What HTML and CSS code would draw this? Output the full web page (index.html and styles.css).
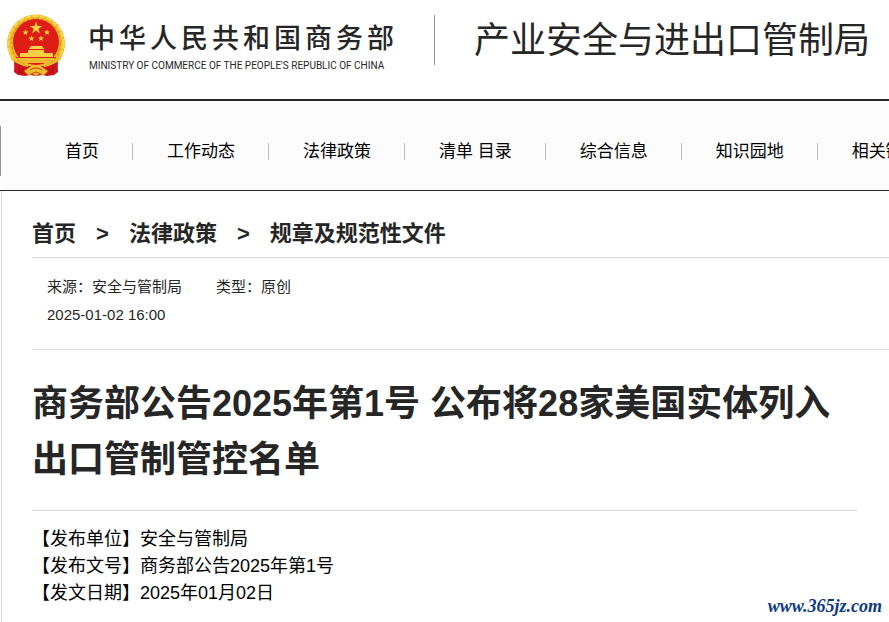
FILE: index.html
```html
<!DOCTYPE html>
<html lang="zh-CN">
<head>
<meta charset="utf-8">
<meta name="viewport" content="width=device-width, initial-scale=1">
<title>商务部公告2025年第1号</title>
<link rel="stylesheet" href="styles.css">
</head>
<body>
<header class="site-header">
  <a class="brand" href="#">
    <svg class="emblem" viewBox="0 0 60 64" aria-hidden="true">
      <path fill="#d0161a" d="M9 44h42l1 14-4 3-7 1-5-1-6 1-6-1-5 1-7-1-4-3z"/>
      <circle cx="30" cy="29.500" r="29" fill="#eebc2c"/>
      <circle cx="30" cy="29.500" r="27.500" fill="none" stroke="#f8d84e" stroke-width="2" stroke-dasharray="5 2"/>
      <circle cx="30" cy="29" r="24.500" fill="none" stroke="#dd9c1c" stroke-width="1.500" stroke-dasharray="3 2"/>
      <circle cx="30" cy="28" r="23" fill="#df1d17"/>
      <path fill="#fbd43c" d="M30 7.500l1.500 4.500h4.800l-3.900 2.800 1.500 4.600-3.900-2.800-3.900 2.800 1.500-4.600-3.900-2.800h4.800z"/>
      <path fill="#fbd43c" d="M19.500 15.500l.8 2.100h2.200l-1.800 1.300.7 2.200-1.900-1.300-1.900 1.300.7-2.200-1.800-1.300h2.200zM41 15.500l.8 2.100h2.200l-1.800 1.300.7 2.200-1.900-1.300-1.900 1.300.7-2.200-1.800-1.300h2.200zM25.500 21.500l.8 2.100h2.200l-1.800 1.300.7 2.200-1.900-1.300-1.900 1.300.7-2.200-1.800-1.300h2.200zM35 21.500l.8 2.100h2.200l-1.800 1.300.7 2.200-1.900-1.300-1.900 1.300.7-2.200-1.800-1.300h2.200z"/>
      <path fill="#f8cf45" d="M25 32h11l2 3H23zM22 36h16v3H22zM14 39h33v4H14z"/>
      <path fill="#df1d17" d="M10 43h40v1H10z"/>
      <path fill="#efbb2e" d="M12 44h36l-4 5H16z"/>
      <path fill="#cf151a" d="M8 46q8 6 14 6t8-1q3 1 8 1t14-6l-1 12-5 3-6-1-4-4H24l-4 4-6 1-5-3z"/>
      <path fill="none" stroke="#efbb2e" stroke-width="2" d="M5 44q9 7 17 8M55 44q-9 7-17 8"/>
      <path fill="#efbb2e" d="M18 57q6-4 8-6h8q2 2 8 6l-4 4-5-1-3 2-3-2-5 1z"/>
      <path fill="none" stroke="#c8421a" d="M24 56q6-4 12 0M25 60l5-2 5 2"/>
      <path fill="none" stroke="#a40d14" d="M13 52l1 8M47 52l-1 8M17 54l-1 6M43 54l1 6"/>
    </svg>
    <span class="brand-text">
      <span class="brand-cn">中华人民共和国商务部</span>
      <span class="brand-en">MINISTRY OF COMMERCE OF THE PEOPLE'S REPUBLIC OF CHINA</span>
    </span>
  </a>
  <div class="bureau">产业安全与进出口管制局</div>
</header>
<nav class="site-nav">
  <ul class="nav-list">
    <li><a href="#">首页</a></li>
    <li><a href="#">工作动态</a></li>
    <li><a href="#">法律政策</a></li>
    <li><a href="#">清单 目录</a></li>
    <li><a href="#">综合信息</a></li>
    <li><a href="#">知识园地</a></li>
    <li><a href="#">相关链接</a></li>
  </ul>
</nav>
<main class="content">
  <div class="breadcrumb">
    <a href="#">首页</a><span>&gt;</span><a href="#">法律政策</a><span>&gt;</span><a href="#">规章及规范性文件</a>
  </div>
  <div class="meta">
    <div class="meta-row"><span>来源：安全与管制局</span><span>类型：原创</span></div>
    <div>2025-01-02 16:00</div>
  </div>
  <article class="article">
    <h1>商务部公告2025年第1号 公布将28家美国实体列入出口管制管控名单</h1>
    <div class="details">
      <p>【发布单位】安全与管制局</p>
      <p>【发布文号】商务部公告2025年第1号</p>
      <p>【发文日期】2025年01月02日</p>
    </div>
  </article>
</main>
<div class="watermark">www.365jz.com</div>
</body>
</html>
```
FILE: styles.css
```css
* {
  box-sizing: border-box;
}

body {
  margin: 0;
  min-height: 100vh;
  display: flex;
  flex-direction: column;
  position: relative;
  overflow-x: hidden;
  background: #fff;
  color: #262626;
  font-family: "Liberation Sans", "Noto Sans CJK SC", sans-serif;
}

a {
  color: inherit;
  text-decoration: none;
}

.site-header {
  display: flex;
  align-items: flex-start;
  height: 101px;
  padding: 14px 0 0 6px;
  border-bottom: 2px solid #262626;
  white-space: nowrap;
}

.brand {
  display: flex;
  gap: 22px;
}

.emblem {
  width: 60px;
  height: 64px;
}

.brand-text {
  display: flex;
  flex-direction: column;
  padding-top: 7px;
}

.brand-cn {
  font-size: 27px;
  font-weight: 500;
  line-height: 36px;
  letter-spacing: 4px;
}

.brand-en {
  padding-left: 1px;
  font-family: Roboto, "Liberation Sans", sans-serif;
  font-size: 10px;
  line-height: 18px;
}

.bureau {
  margin: 1px 0 0 36px;
  padding-left: 39px;
  border-left: 1px solid #999;
  font-size: 36px;
  line-height: 52px;
  height: 50px;
}

.site-nav {
  height: 90px;
  padding: 25px 0 0;
  overflow: hidden;
  border-bottom: 1px solid #262626;
  background: #fcfcfc;
}

.nav-list {
  display: flex;
  align-items: center;
  height: 50px;
  margin: 0;
  padding: 0 0 0 30px;
  border-left: 1px solid #999;
  list-style: none;
  color: #000;
  font-size: 17px;
  line-height: 17px;
  white-space: nowrap;
}

.nav-list li {
  flex: none;
  padding: 0 33px 0 34px;
}

.nav-list li + li {
  border-left: 1px solid #bbb;
}

.content {
  flex: 1;
  margin-left: 1px;
  padding: 19px 0 0 30px;
  border-left: 1px solid #ddd;
}

.breadcrumb {
  display: flex;
  gap: 20px;
  border-bottom: 1px solid #ddd;
  font-size: 22px;
  font-weight: 700;
  line-height: 47px;
}

.meta {
  padding: 15px 15px 20px;
  border-bottom: 1px solid #ddd;
  font-size: 15px;
  line-height: 28px;
}

.meta-row {
  display: flex;
  gap: 34px;
}

.article {
  margin-right: 32px;
}

h1 {
  margin: 0;
  padding: 26px 0 22px;
  border-bottom: 1px solid #ddd;
  font-size: 36px;
  line-height: 56px;
}

.details {
  padding-top: 15px;
  color: #000;
  font-size: 18px;
  line-height: 27px;
}

.details p {
  margin: 0;
}

.watermark {
  position: absolute;
  right: 7px;
  bottom: 6px;
  color: #0b3a82;
  font: italic bold 18px/20px "Liberation Serif", serif;
}
```
